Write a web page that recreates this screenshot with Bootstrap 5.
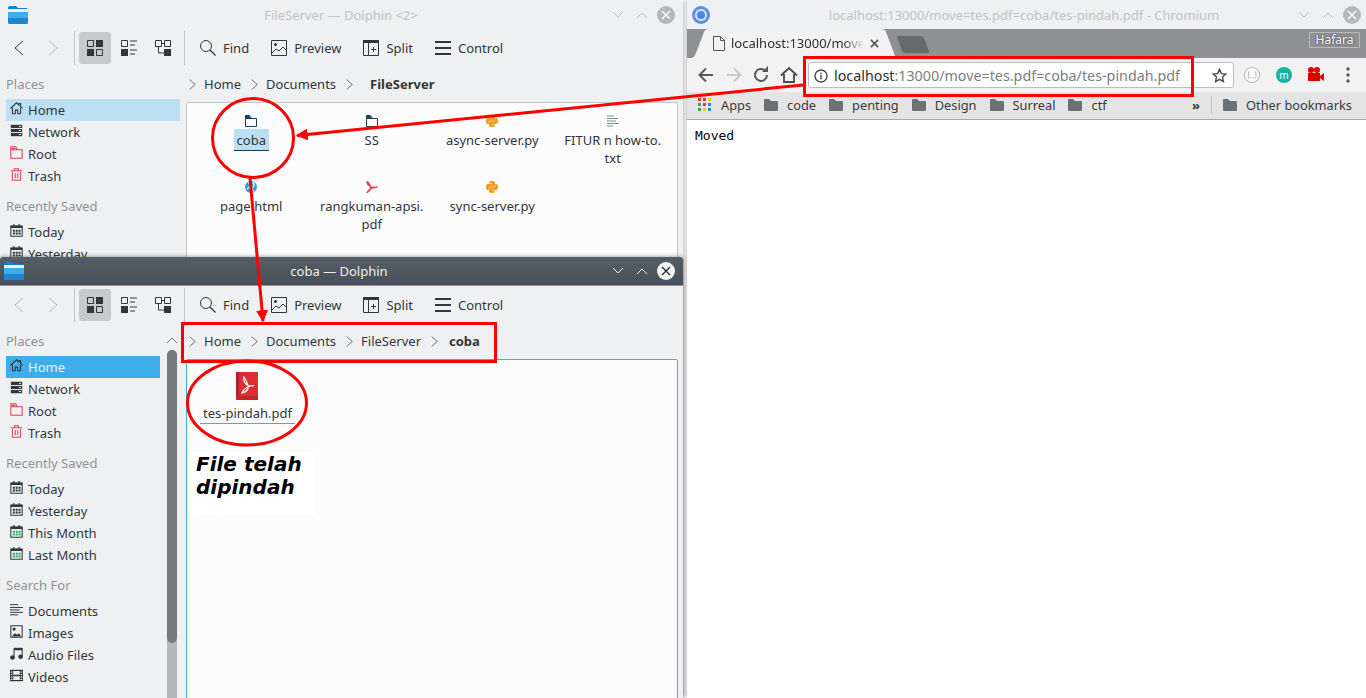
<!DOCTYPE html>
<html lang="en">
<head>
  <meta charset="UTF-8">
  <meta name="viewport" content="width=device-width, initial-scale=1">
  <title>File telah dipindah</title>
  <link href="https://cdn.jsdelivr.net/npm/bootstrap@5.3.0/dist/css/bootstrap.min.css" rel="stylesheet">
  <style>
    body { width: 1366px; height: 698px; overflow: hidden; background: #fff; font: 13px/18px "Noto Sans", sans-serif; color: #31363b; }
    .ico { width: 16px; height: 16px; flex: none; display: block; }

    /* dolphin windows */
    .win { left: 0; width: 683px; background: #eff0f1; box-shadow: 0 0 4px rgba(0,0,0,.45); overflow: hidden; }
    .win-back { top: 0; height: 698px; }
    .win-front { top: 257px; height: 441px; border-radius: 3px 3px 0 0; }
    .titlebar { height: 29px; padding: 0 8px 0 4px; }
    .win-back .titlebar { padding-left: 8px; color: #bdc3c7; }
    .win-front .titlebar { height: 29px; background: linear-gradient(#555e66, #475057); border-bottom: 1px solid #3daee9; color: #eff0f1; }
    .title-text { font-size: 13px; white-space: nowrap; }
    .winbtn { width: 24px; height: 18px; }
    .winclose { width: 18px; height: 18px; border-radius: 50%; margin-left: 3px; }
    .win-back .winclose { background: #b5b8ba; }
    .win-front .winclose { background: #f4f5f5; }
    .toolbar { height: 37px; padding-left: 2px; }
    .tool-nav { width: 34px; height: 32px; }
    .tool-sep { width: 1px; height: 34px; background: #c3c5c7; margin: 0 4px; }
    .tool-view { width: 32px; height: 32px; border-radius: 3px; margin-right: 2px; }
    .tool-view + .tool-sep { margin-left: 3px; }
    .tool-view.on { background: #c8c9cb; }
    .tool-text { gap: 7px; margin-left: 15px; margin-right: 7px; }
    .tool-sep + .tool-text { margin-left: 11px; }
    .side { width: 186px; padding: 7px 6px 0; position: relative; flex: none; }
    .side-head { height: 22px; line-height: 22px; color: #8f9194; margin-bottom: 4px; }
    .side-head.later { margin-top: 8px; }
    .side-row { height: 22px; gap: 5px; padding-left: 4px; width: 174px; }
    .side-row .ico { width: 13px; height: 13px; margin-bottom: 3px; }
    .win-front .side-row { width: 154px; }
    .side-row.on-back { background: #bddff3; }
    .side-row.on-front { background: #3daee9; color: #eff0f1; }
    .side-scroll { left: 167px; top: 27px; bottom: 0; width: 10px; background: #b6b7b9; border-radius: 5px 5px 0 0; }
    .side-thumb { height: 293px; background: #77797d; border-radius: 5px; }
    .side-up { left: 166px; top: 11px; width: 12px; height: 12px; }
    .crumbs { height: 36px; padding-left: 1px; }
    .crumb-sep { width: 11px; height: 11px; flex: none; margin-right: 6px; }
    .crumb { margin-right: 8px; }
    .crumb-cur { margin-left: 3px; }
    .win-back .crumb-cur { margin-left: 9px; }
    .view { height: 640px; background: #fcfcfc; border: 1px solid #c3c5c7; border-radius: 2px; margin-right: 5px; padding-left: 4px; position: relative; }
    .win-front .view { border-color: #3daee9; }
    .file-grid { display: grid; grid-template-columns: repeat(4, 120.5px); grid-auto-rows: 66px; }
    .file { text-align: center; padding-top: 12px; padding-inline: 8px; }
    .file svg { width: 12px; height: 12px; display: block; margin: 0 auto 4px; }
    .file span { display: inline-block; }
    .file .sel { background: #bddff3; border-bottom: 1px solid #1d3c53; padding: 2px 3px 0; margin-top: -2px; height: 22px; }
    .pdf-item { width: 113px; text-align: center; padding-top: 12px; }
    .pdf-item svg { width: 22px; height: 28px; display: block; margin: 0 auto 4px; transform: translateX(-1px); }
    .pdf-name { width: 95px; margin: 0 auto; border-bottom: 1px solid #3daee9; height: 20px; }
    .note { left: 4px; top: 92px; width: 123px; height: 62px; background: #fff; padding: 1px 5px 0; font: italic bold 20px/23px "DejaVu Sans", sans-serif; color: #000; }

    /* chromium */
    .browser { left: 687px; top: 0; width: 679px; height: 698px; background: #fff; box-shadow: 0 0 3px rgba(0,0,0,.4); }
    .ch-title { height: 29px; background: #eff0f1; color: #bdc3c7; padding: 0 5px; }
    .ch-logo { width: 18px; height: 18px; flex: none; }
    .tabstrip { height: 29px; background: #8e9093; position: relative; }
    .ch-tab { left: 4px; bottom: 0; width: 206px; height: 29px; }
    .ch-tab-text { left: 44px; top: 5px; width: 133px; height: 18px; white-space: nowrap; font-size: 13px; color: #303030; -webkit-mask-image: linear-gradient(to right, #000 85%, transparent); mask-image: linear-gradient(to right, #000 85%, transparent); }
    .ch-newtab { left: 209px; top: 7px; width: 34px; height: 17px; }
    .ch-user { right: 6px; top: 3px; width: 51px; height: 16px; border: 1px solid #b9babc; border-radius: 1px; color: #fff; font-size: 12px; line-height: 14px; text-align: center; text-shadow: 0 0 2px #222; }
    .ch-bar { height: 34px; background: #f2f2f2; padding-left: 9px; }
    .ch-nav { width: 20px; height: 20px; flex: none; margin-right: 8px; }
    .ch-nav:nth-child(2) { margin-right: 7px; }
    .ch-nav:nth-child(4) { margin-right: 9px; }
    .omni { width: 426px; height: 26px; flex: none; background: #fff; border: 1px solid #bdbdbd; border-radius: 3px; padding: 1px 6px 0 5px; font-size: 14.3px; color: #7d7d7d; white-space: nowrap; }
    .omni b { font-weight: 400; color: #2e2e2e; }
    .omni-url { margin-left: 6px; }
    .ext { width: 20px; height: 20px; flex: none; margin-left: 12px; }
    .omni + .ext { margin-left: 8px; }
    .bookmarks { height: 28px; background: #e4e4e4; border-bottom: 1px solid #a8a8a8; padding: 0 1px 2px 11px; white-space: nowrap; color: #3a3a3a; font-size: 12.8px; }
    .bm { gap: 9px; margin-right: 13px; }
    .bm svg { width: 14px; height: 12px; flex: none; }
    .bm-more { margin-right: 11px; font-size: 13px; }
    .bm-sep { width: 1px; height: 18px; background: #c4c4c4; margin-right: 11px; }
    .moved { font: 13px/18px "DejaVu Sans Mono", monospace; color: #000; padding: 7px 8px; }

    .marks { left: 0; top: 0; width: 1366px; height: 698px; pointer-events: none; }
  </style>
</head>
<body>

<!-- shared icons -->
<svg width="0" height="0" class="position-absolute">
  <symbol id="i-folder-blue" viewBox="0 0 20 18">
    <path d="M0 2 Q0 0 2 0H8L10 2H18Q20 2 20 4V16Q20 18 18 18H2Q0 18 0 16Z" fill="#1d7fc4"/>
    <rect x="0" y="3" width="20" height="3" fill="#e8eef3"/>
    <path d="M0 6H20V16Q20 18 18 18H2Q0 18 0 16Z" fill="#3daee9"/>
    <path d="M0 12H20V16Q20 18 18 18H2Q0 18 0 16Z" fill="#1f86cf"/>
  </symbol>
  <symbol id="i-left" viewBox="0 0 16 16"><path d="M12 1 4 8l8 7" fill="none" stroke="currentColor"/></symbol>
  <symbol id="i-right" viewBox="0 0 16 16"><path d="M4 1l8 7-8 7" fill="none" stroke="currentColor"/></symbol>
  <symbol id="i-down" viewBox="0 0 12 8"><path d="M1 1l5 5 5-5" fill="none" stroke="currentColor" stroke-width="1"/></symbol>
  <symbol id="i-up" viewBox="0 0 12 8"><path d="M1 7l5-5 5 5" fill="none" stroke="currentColor" stroke-width="1"/></symbol>
  <symbol id="i-x" viewBox="0 0 10 10"><path d="M1 1l8 8M9 1 1 9" fill="none" stroke="currentColor" stroke-width="1.300"/></symbol>
  <symbol id="i-icons" viewBox="0 0 16 16">
    <path d="M.5.5h6v6h-6zM9.5 9.5h6v6h-6z" fill="none" stroke="#31363b"/>
    <path d="M9 0h7v7H9zM0 9h7v7H0z" fill="#31363b"/>
  </symbol>
  <symbol id="i-details" viewBox="0 0 16 16">
    <path d="M.5.5h6v6h-6z" fill="none" stroke="#31363b"/>
    <path d="M0 9h7v7H0z" fill="#31363b"/>
    <path d="M9 1h7M9 5h5M9 10h7M9 14h5" stroke="#31363b"/>
  </symbol>
  <symbol id="i-tree" viewBox="0 0 16 16">
    <path d="M.5.5h6v6h-6zM9.5.5h6v6h-6zM3.500 7v6H9M7 3.500h2" fill="none" stroke="#31363b"/>
    <path d="M9 9h7v7H9z" fill="#31363b"/>
  </symbol>
  <symbol id="i-find" viewBox="0 0 16 16"><circle cx="6" cy="6" r="5.500" fill="none" stroke="#31363b"/><path d="M10 10l5.500 5.500" stroke="#31363b" stroke-width="1.200"/></symbol>
  <symbol id="i-preview" viewBox="0 0 16 16"><path d="M.5.5h15v15H.5z" fill="none" stroke="#31363b"/><circle cx="4.500" cy="4.500" r="1.500" fill="#31363b"/><path d="M1 13l4-4 3 2 4-4 3 3" fill="none" stroke="#31363b"/></symbol>
  <symbol id="i-split" viewBox="0 0 16 16"><path d="M.5.5h15v15H.5zM5.500 3v12.500" fill="none" stroke="#31363b"/><path d="M0 0h16v3H0z" fill="#31363b"/><path d="M8 9.500h5M10.500 7v5" stroke="#31363b"/></symbol>
  <symbol id="i-control" viewBox="0 0 16 16"><path d="M0 2h16M0 8h16M0 14h16" stroke="#31363b" stroke-width="2"/></symbol>
  <symbol id="i-home" viewBox="0 0 16 16"><path d="M.5 8 8 1l3 2.800V2h2v3.500L15.500 8M3 7v7.500h3.500V10h3v4.500H13V7" fill="none" stroke="#31363b" stroke-width="1.300"/></symbol>
  <symbol id="i-network" viewBox="0 0 16 16"><path d="M1 1h14v14H1z" fill="#31363b"/><path d="M1 5.500h14M1 10.500h14" stroke="#eff0f1" stroke-width="1.200"/><path d="M11 3h2.500M11 8h2.500M11 13h2.500" stroke="#eff0f1" stroke-width="1.200"/></symbol>
  <symbol id="i-root" viewBox="0 0 16 16"><path d="M1 4.500h14v10.500H1zM1 4.500V1h6l2 3.500" fill="none" stroke="#da4453" stroke-width="1.300"/><path d="M2 2h4l1 2H2z" fill="#da4453"/></symbol>
  <symbol id="i-trash" viewBox="0 0 16 16"><path d="M3 4.500V15h10V4.500M1 3.500h14M5.500 3V1h5v2M6.500 6.500v6M9.500 6.500v6" fill="none" stroke="#da4453" stroke-width="1.300"/></symbol>
  <symbol id="i-cal" viewBox="0 0 16 16"><path d="M1 2.500h14V15H1z" fill="none" stroke="#31363b" stroke-width="1.300"/><path d="M1 2h14v3H1zM4 0h1.500v3H4zM10.500 0H12v3h-1.500z" fill="#31363b"/><path d="M3.500 7h2.500v2.500H3.500zM7 7h2.500v2.500H7zM10.500 7H13v2.500h-2.500zM3.500 10.500h2.500V13H3.500zM7 10.500h2.500V13H7zM10.500 10.500H13V13h-2.500z" fill="#31363b"/></symbol>
  <symbol id="i-cal-g" viewBox="0 0 16 16"><path d="M1 2.500h14V15H1z" fill="none" stroke="#31363b" stroke-width="1.300"/><path d="M1 2h14v3H1zM4 0h1.500v3H4zM10.500 0H12v3h-1.500z" fill="#31363b"/><path d="M3.500 7h2.500v2.500H3.500zM7 7h2.500v2.500H7zM10.500 7H13v2.500h-2.500zM3.500 10.500h2.500V13H3.500zM7 10.500h2.500V13H7zM10.500 10.500H13V13h-2.500z" fill="#27ae60"/></symbol>
  <symbol id="i-doc" viewBox="0 0 16 16"><path d="M0 2h10M0 5.500h16M0 8.500h12M0 11.500h16M0 14.500h10" stroke="#31363b" stroke-width="1.200"/></symbol>
  <symbol id="i-img" viewBox="0 0 16 16"><path d="M1 1h14v14H1z" fill="none" stroke="#31363b" stroke-width="1.300"/><circle cx="5" cy="5" r="2" fill="#31363b"/><path d="M2 14l4-4 3 2 2-2 3 4z" fill="#31363b"/></symbol>
  <symbol id="i-audio" viewBox="0 0 16 16"><path d="M5 13V2h10v10" fill="none" stroke="#31363b" stroke-width="1.300"/><path d="M5 1h10v3H5z" fill="#31363b"/><circle cx="3" cy="13" r="2.800" fill="#31363b"/><circle cx="13" cy="12" r="2.800" fill="#31363b"/></symbol>
  <symbol id="i-video" viewBox="0 0 16 16"><path d="M0 1h16v14H0z" fill="#31363b"/><path d="M4 2.500h8v4.500H4zM4 9h8v4.500H4z" fill="#eff0f1"/><path d="M1 3h2v1.500H1zM1 6h2v1.500H1zM1 9h2v1.500H1zM1 12h2v1.500H1zM13 3h2v1.500h-2zM13 6h2v1.500h-2zM13 9h2v1.500h-2zM13 12h2v1.500h-2z" fill="#eff0f1"/></symbol>
  <symbol id="i-file-folder" viewBox="0 0 12 12"><path d="M.5 3.500h11v8H.5zM.5 3.500V.5h4l2 3" fill="none" stroke="#1d3c53"/><path d="M1 1h3l1.500 2H1z" fill="#1d3c53"/></symbol>
  <symbol id="i-python" viewBox="0 0 12 12">
    <path d="M5.900 0C3 0 3.200 1.300 3.200 1.300V2.600H6V3H2C2 3 0 2.800 0 5.900S1.700 9 1.700 9H2.800V7.500S2.700 5.800 4.500 5.800H7.400S9 5.800 9 4.200V1.600S9.300 0 5.900 0Z" fill="#f39c1f"/>
    <path d="M5.900 0C3 0 3.200 1.300 3.200 1.300V2.600H6V3H2C2 3 0 2.800 0 5.900S1.700 9 1.700 9H2.800V7.500S2.700 5.800 4.500 5.800H7.400S9 5.800 9 4.200V1.600S9.300 0 5.900 0Z" fill="#f39c1f" transform="rotate(180 6 6)"/>
  </symbol>
  <symbol id="i-text" viewBox="0 0 12 12"><path d="M0 1h7M0 3.500h11M0 6h9M0 8.500h12M0 11h6" stroke="#7f8c8d"/></symbol>
  <symbol id="i-globe" viewBox="0 0 12 12"><circle cx="6" cy="6" r="6" fill="#3498db"/><path d="M3 2Q6 3 5 5T2 8M8 1Q10 4 8 6T9 11" fill="none" stroke="#dff1fb" stroke-width="1.500"/></symbol>
  <symbol id="i-acrobat" viewBox="0 0 12 12"><path d="M1.500.5Q4 3 4.500 6T1 11.500Q3.500 6.500 11.500 6 7 7.500 3.500 5T1.500.5Z" fill="none" stroke="#da4453" stroke-width="1.300"/></symbol>
  <symbol id="i-bm-folder" viewBox="0 0 14 12"><path d="M0 1Q0 0 1 0H5L7 2H13Q14 2 14 3V11Q14 12 13 12H1Q0 12 0 11Z" fill="#6c7176"/></symbol>
</svg>

<!-- back window -->
<div class="win win-back position-absolute">
  <div class="titlebar d-flex align-items-center position-relative">
    <svg width="20" height="18"><use href="#i-folder-blue"/></svg>
    <span class="title-text position-absolute top-50 translate-middle" style="left: 341px">FileServer — Dolphin &lt;2&gt;</span>
    <div class="ms-auto d-flex align-items-center">
      <svg class="winbtn" viewBox="0 0 24 18"><use href="#i-down" x="6" y="5" width="12" height="8"/></svg>
      <svg class="winbtn" viewBox="0 0 24 18"><use href="#i-up" x="6" y="5" width="12" height="8"/></svg>
      <div class="winclose d-flex align-items-center justify-content-center text-white"><svg width="10" height="10"><use href="#i-x"/></svg></div>
    </div>
  </div>
  <div class="toolbar d-flex align-items-center">
    <div class="tool-nav d-flex align-items-center justify-content-center"><svg class="ico"><use href="#i-left"/></svg></div>
    <div class="tool-nav d-flex align-items-center justify-content-center text-secondary opacity-50"><svg class="ico"><use href="#i-right"/></svg></div>
    <div class="tool-sep"></div>
    <div class="tool-view on d-flex align-items-center justify-content-center"><svg class="ico"><use href="#i-icons"/></svg></div>
    <div class="tool-view d-flex align-items-center justify-content-center"><svg class="ico"><use href="#i-details"/></svg></div>
    <div class="tool-view d-flex align-items-center justify-content-center"><svg class="ico"><use href="#i-tree"/></svg></div>
    <div class="tool-sep"></div>
    <div class="tool-text d-flex align-items-center"><svg class="ico"><use href="#i-find"/></svg>Find</div>
    <div class="tool-text d-flex align-items-center"><svg class="ico"><use href="#i-preview"/></svg>Preview</div>
    <div class="tool-text d-flex align-items-center"><svg class="ico"><use href="#i-split"/></svg>Split</div>
    <div class="tool-text d-flex align-items-center"><svg class="ico"><use href="#i-control"/></svg>Control</div>
  </div>
  <div class="d-flex">
    <div class="side">
      <div class="side-head">Places</div>
      <div class="side-row on-back d-flex align-items-center"><svg class="ico"><use href="#i-home"/></svg>Home</div>
      <div class="side-row d-flex align-items-center"><svg class="ico"><use href="#i-network"/></svg>Network</div>
      <div class="side-row d-flex align-items-center"><svg class="ico"><use href="#i-root"/></svg>Root</div>
      <div class="side-row d-flex align-items-center"><svg class="ico"><use href="#i-trash"/></svg>Trash</div>
      <div class="side-head later">Recently Saved</div>
      <div class="side-row d-flex align-items-center"><svg class="ico"><use href="#i-cal"/></svg>Today</div>
      <div class="side-row d-flex align-items-center"><svg class="ico"><use href="#i-cal"/></svg>Yesterday</div>
    </div>
    <div class="flex-grow-1">
      <div class="crumbs d-flex align-items-center">
        <svg class="crumb-sep"><use href="#i-right"/></svg><span class="crumb">Home</span>
        <svg class="crumb-sep"><use href="#i-right"/></svg><span class="crumb">Documents</span>
        <svg class="crumb-sep"><use href="#i-right"/></svg><span class="crumb crumb-cur fw-bold">FileServer</span>
      </div>
      <div class="view">
        <div class="file-grid">
          <div class="file"><svg><use href="#i-file-folder"/></svg><span class="sel">coba</span></div>
          <div class="file"><svg><use href="#i-file-folder"/></svg><span>SS</span></div>
          <div class="file"><svg><use href="#i-python"/></svg><span>async-server.py</span></div>
          <div class="file"><svg><use href="#i-text"/></svg><span>FITUR n how-to.<br>txt</span></div>
          <div class="file"><svg><use href="#i-globe"/></svg><span>page.html</span></div>
          <div class="file"><svg><use href="#i-acrobat"/></svg><span>rangkuman-apsi.<br>pdf</span></div>
          <div class="file"><svg><use href="#i-python"/></svg><span>sync-server.py</span></div>
        </div>
      </div>
    </div>
  </div>
</div>

<!-- front window -->
<div class="win win-front position-absolute">
  <div class="titlebar d-flex align-items-center position-relative">
    <svg width="20" height="18"><use href="#i-folder-blue"/></svg>
    <span class="title-text position-absolute top-50 translate-middle" style="left: 339px">coba — Dolphin</span>
    <div class="ms-auto d-flex align-items-center">
      <svg class="winbtn" viewBox="0 0 24 18"><use href="#i-down" x="6" y="5" width="12" height="8"/></svg>
      <svg class="winbtn" viewBox="0 0 24 18"><use href="#i-up" x="6" y="5" width="12" height="8"/></svg>
      <div class="winclose d-flex align-items-center justify-content-center text-dark"><svg width="10" height="10"><use href="#i-x"/></svg></div>
    </div>
  </div>
  <div class="toolbar d-flex align-items-center">
    <div class="tool-nav d-flex align-items-center justify-content-center text-secondary opacity-50"><svg class="ico"><use href="#i-left"/></svg></div>
    <div class="tool-nav d-flex align-items-center justify-content-center text-secondary opacity-50"><svg class="ico"><use href="#i-right"/></svg></div>
    <div class="tool-sep"></div>
    <div class="tool-view on d-flex align-items-center justify-content-center"><svg class="ico"><use href="#i-icons"/></svg></div>
    <div class="tool-view d-flex align-items-center justify-content-center"><svg class="ico"><use href="#i-details"/></svg></div>
    <div class="tool-view d-flex align-items-center justify-content-center"><svg class="ico"><use href="#i-tree"/></svg></div>
    <div class="tool-sep"></div>
    <div class="tool-text d-flex align-items-center"><svg class="ico"><use href="#i-find"/></svg>Find</div>
    <div class="tool-text d-flex align-items-center"><svg class="ico"><use href="#i-preview"/></svg>Preview</div>
    <div class="tool-text d-flex align-items-center"><svg class="ico"><use href="#i-split"/></svg>Split</div>
    <div class="tool-text d-flex align-items-center"><svg class="ico"><use href="#i-control"/></svg>Control</div>
  </div>
  <div class="d-flex">
    <div class="side">
      <div class="side-head">Places</div>
      <svg class="side-up position-absolute text-secondary"><use href="#i-up"/></svg>
      <div class="side-scroll position-absolute"><div class="side-thumb"></div></div>
      <div class="side-row on-front d-flex align-items-center"><svg class="ico"><use href="#i-home"/></svg>Home</div>
      <div class="side-row d-flex align-items-center"><svg class="ico"><use href="#i-network"/></svg>Network</div>
      <div class="side-row d-flex align-items-center"><svg class="ico"><use href="#i-root"/></svg>Root</div>
      <div class="side-row d-flex align-items-center"><svg class="ico"><use href="#i-trash"/></svg>Trash</div>
      <div class="side-head later">Recently Saved</div>
      <div class="side-row d-flex align-items-center"><svg class="ico"><use href="#i-cal"/></svg>Today</div>
      <div class="side-row d-flex align-items-center"><svg class="ico"><use href="#i-cal"/></svg>Yesterday</div>
      <div class="side-row d-flex align-items-center"><svg class="ico"><use href="#i-cal-g"/></svg>This Month</div>
      <div class="side-row d-flex align-items-center"><svg class="ico"><use href="#i-cal-g"/></svg>Last Month</div>
      <div class="side-head later">Search For</div>
      <div class="side-row d-flex align-items-center"><svg class="ico"><use href="#i-doc"/></svg>Documents</div>
      <div class="side-row d-flex align-items-center"><svg class="ico"><use href="#i-img"/></svg>Images</div>
      <div class="side-row d-flex align-items-center"><svg class="ico"><use href="#i-audio"/></svg>Audio Files</div>
      <div class="side-row d-flex align-items-center"><svg class="ico"><use href="#i-video"/></svg>Videos</div>
    </div>
    <div class="flex-grow-1">
      <div class="crumbs d-flex align-items-center">
        <svg class="crumb-sep"><use href="#i-right"/></svg><span class="crumb">Home</span>
        <svg class="crumb-sep"><use href="#i-right"/></svg><span class="crumb">Documents</span>
        <svg class="crumb-sep"><use href="#i-right"/></svg><span class="crumb">FileServer</span>
        <svg class="crumb-sep"><use href="#i-right"/></svg><span class="crumb crumb-cur fw-bold">coba</span>
      </div>
      <div class="view">
        <div class="pdf-item">
          <svg viewBox="0 0 22 28">
            <path d="M0 0H22V28H0Z" fill="#d92f35"/>
            <path d="M0 0H3V28H0Z" fill="#b32228"/>
            <path d="M0 24H22V28H0Z" fill="#bf272d"/>
            <path d="M8 5Q11 9 12 14T6 21Q9 14 18 13.500 13 15 10 12T8 5Z" fill="none" stroke="#fff" stroke-width="1.200"/>
          </svg>
          <div class="pdf-name">tes-pindah.pdf</div>
        </div>
        <div class="note position-absolute">File telah dipindah</div>
      </div>
    </div>
  </div>
</div>

<!-- browser window -->
<div class="browser position-absolute d-flex flex-column">
  <div class="ch-title d-flex align-items-center position-relative">
    <svg class="ch-logo" viewBox="0 0 18 18"><circle cx="9" cy="9" r="9" fill="#5e8fe6"/><circle cx="9" cy="9" r="6" fill="#d8e4fa"/><circle cx="9" cy="9" r="4" fill="#4f86e6"/></svg>
    <span class="title-text position-absolute top-50 translate-middle" style="left: 337px">localhost:13000/move=tes.pdf=coba/tes-pindah.pdf - Chromium</span>
    <div class="ms-auto d-flex align-items-center">
      <svg class="winbtn" viewBox="0 0 24 18"><use href="#i-down" x="6" y="5" width="12" height="8"/></svg>
      <svg class="winbtn" viewBox="0 0 24 18"><use href="#i-up" x="6" y="5" width="12" height="8"/></svg>
      <div class="winclose d-flex align-items-center justify-content-center text-white" style="background: #b5b8ba"><svg width="10" height="10"><use href="#i-x"/></svg></div>
    </div>
  </div>
  <div class="tabstrip">
    <svg class="ch-tab position-absolute" viewBox="0 0 206 29"><path d="M0 29Q3 29 5 24L13 3Q14 0 18 0H190Q194 0 195 3L203 24Q204 29 206 29Z" fill="#f2f2f2"/></svg>
    <svg class="position-absolute" style="left: 26px; top: 7px" width="12" height="15" viewBox="0 0 12 15"><path d="M.5.5H7.500L11.500 4.500V14.500H.5ZM7.500.5V4.500H11.500" fill="none" stroke="#555"/></svg>
    <div class="ch-tab-text position-absolute">localhost:13000/move</div>
    <svg class="position-absolute" style="left: 183px; top: 10px" width="9" height="9" viewBox="0 0 10 10"><path d="M1 1l8 8M9 1 1 9" stroke="#555" stroke-width="1.800"/></svg>
    <svg class="ch-newtab position-absolute" viewBox="0 0 34 17"><path d="M1 1Q0 0 3 0H24Q27 0 28 2L33 15Q34 17 31 17H10Q7 17 6 15Z" fill="#67696c"/></svg>
    <div class="ch-user position-absolute">Hafara</div>
  </div>
  <div class="ch-bar d-flex align-items-center">
    <svg class="ch-nav" viewBox="0 0 20 20"><path d="M17 10H4M10 3.500 3.500 10l6.500 6.500" fill="none" stroke="#5a5a5a" stroke-width="2"/></svg>
    <svg class="ch-nav" viewBox="0 0 20 20"><path d="M3 10H16M10 3.500 16.500 10 10 16.500" fill="none" stroke="#c8c8c8" stroke-width="2"/></svg>
    <svg class="ch-nav" viewBox="0 0 20 20"><path d="M16 10A6 6 0 1 1 14 5.500" fill="none" stroke="#5a5a5a" stroke-width="2"/><path d="M11 7H17V1Z" fill="#5a5a5a"/></svg>
    <svg class="ch-nav" viewBox="0 0 20 20"><path d="M2 10.500 10 3l8 7.500M5 9v8h10V9" fill="none" stroke="#4a4a4a" stroke-width="1.800"/></svg>
    <div class="omni d-flex align-items-center">
      <svg width="14" height="14" viewBox="0 0 14 14"><circle cx="7" cy="7" r="6" fill="none" stroke="#4a4a4a" stroke-width="1.400"/><path d="M7 6v4.500M7 3.500v1.500" stroke="#4a4a4a" stroke-width="1.400"/></svg>
      <span class="omni-url"><b>localhost</b>:13000/move=tes.pdf=coba/tes-pindah.pdf</span>
      <svg class="ms-auto" width="15" height="15" viewBox="0 0 16 16"><path d="M8 1.500l2 4.500 4.800.5-3.600 3.200 1 4.800L8 12.100 3.800 14.500l1-4.800L1.200 6.500 6 6z" fill="none" stroke="#4a4a4a" stroke-width="1.500"/></svg>
    </div>
    <svg class="ext" viewBox="0 0 20 20"><circle cx="10" cy="10" r="7.500" fill="#fff" stroke="#bdbdbd" stroke-width="1.200"/><text x="10" y="13" font-size="8" text-anchor="middle" fill="#9a9a9a" font-family="Noto Sans, sans-serif">(..)</text></svg>
    <svg class="ext" viewBox="0 0 20 20"><circle cx="10" cy="10" r="8" fill="#12b5a6"/><text x="10" y="13.500" font-size="10" text-anchor="middle" fill="#fff" font-family="Noto Sans, sans-serif">m</text></svg>
    <svg class="ext" viewBox="0 0 20 20"><circle cx="5" cy="5" r="3" fill="#e00000"/><circle cx="11" cy="5" r="3" fill="#e00000"/><path d="M2 8h12v8H2zM14 11l4-3v8l-4-3z" fill="#e00000"/></svg>
    <svg class="ext" viewBox="0 0 20 20"><circle cx="10" cy="4" r="1.700" fill="#5a5a5a"/><circle cx="10" cy="10" r="1.700" fill="#5a5a5a"/><circle cx="10" cy="16" r="1.700" fill="#5a5a5a"/></svg>
  </div>
  <div class="bookmarks d-flex align-items-center">
    <div class="bm d-flex align-items-center"><svg viewBox="0 0 14 14" style="height: 14px"><path d="M0 0h3v3H0z" fill="#e53935"/><path d="M5 0h3v3H5z" fill="#e53935"/><path d="M10 0h3v3h-3z" fill="#fbc02d"/><path d="M0 5h3v3H0z" fill="#43a047"/><path d="M5 5h3v3H5z" fill="#e53935"/><path d="M10 5h3v3h-3z" fill="#1e88e5"/><path d="M0 10h3v3H0z" fill="#43a047"/><path d="M5 10h3v3H5z" fill="#fbc02d"/><path d="M10 10h3v3h-3z" fill="#1e88e5"/></svg>Apps</div>
    <div class="bm d-flex align-items-center"><svg><use href="#i-bm-folder"/></svg>code</div>
    <div class="bm d-flex align-items-center"><svg><use href="#i-bm-folder"/></svg>penting</div>
    <div class="bm d-flex align-items-center"><svg><use href="#i-bm-folder"/></svg>Design</div>
    <div class="bm d-flex align-items-center"><svg><use href="#i-bm-folder"/></svg>Surreal</div>
    <div class="bm d-flex align-items-center"><svg><use href="#i-bm-folder"/></svg>ctf</div>
    <span class="bm-more ms-auto fw-bold">»</span>
    <div class="bm-sep"></div>
    <div class="bm d-flex align-items-center"><svg><use href="#i-bm-folder"/></svg>Other bookmarks</div>
  </div>
  <div class="moved">Moved</div>
</div>

<!-- red annotations -->
<svg class="marks position-absolute" viewBox="0 0 1366 698">
  <defs>
    <marker id="arrow" viewBox="0 0 10 10" refX="9" refY="5" markerWidth="4" markerHeight="4" orient="auto"><path d="M0 0 10 5 0 10Z" fill="#f00"/></marker>
  </defs>
  <g fill="none" stroke="#f00" stroke-width="3">
    <ellipse cx="253" cy="138" rx="40.500" ry="39.500"/>
    <ellipse cx="247" cy="403" rx="59.500" ry="42"/>
    <rect x="182.500" y="323.500" width="313" height="38"/>
    <rect x="804.500" y="57.500" width="388" height="38"/>
    <path d="M803 85 297 135.500" marker-end="url(#arrow)"/>
    <path d="M250 178 263 321" marker-end="url(#arrow)"/>
  </g>
</svg>

<script src="https://cdn.jsdelivr.net/npm/bootstrap@5.3.0/dist/js/bootstrap.bundle.min.js"></script>
</body>
</html>
